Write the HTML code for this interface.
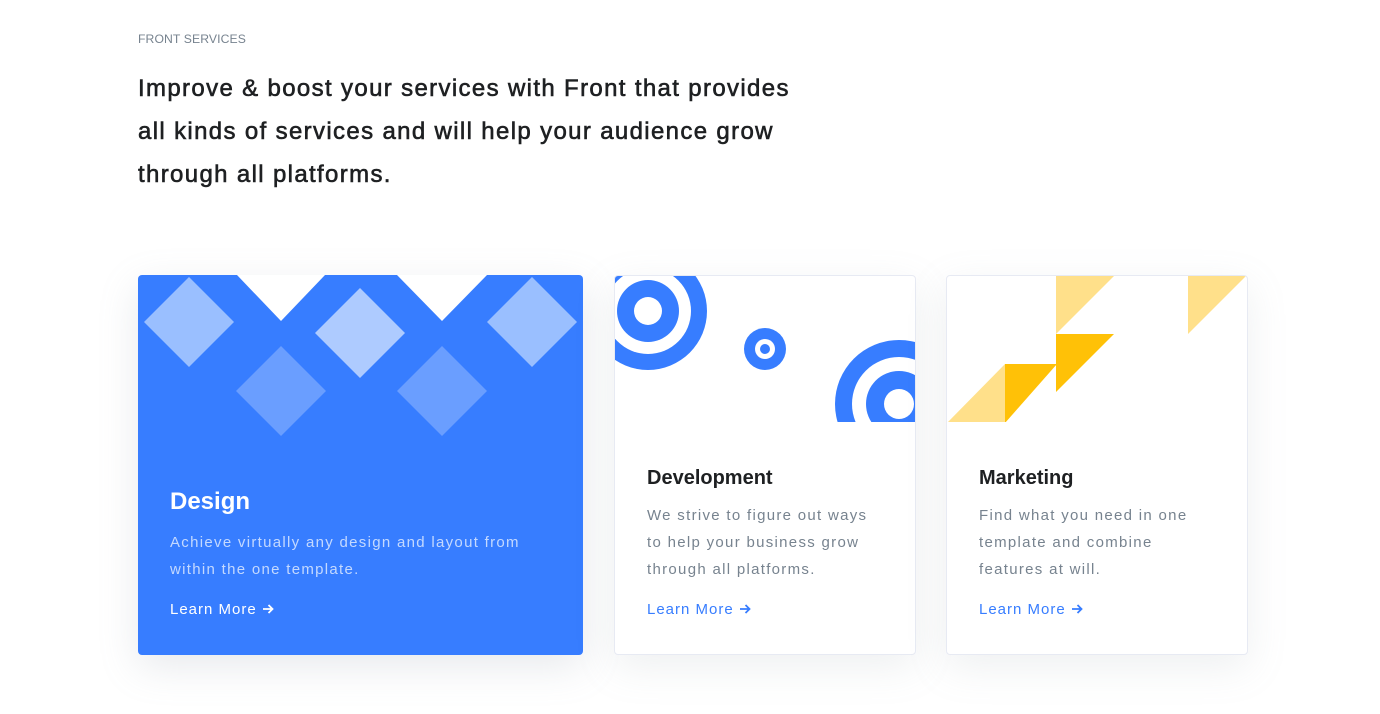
<!DOCTYPE html>
<html><head><meta charset="utf-8"><style>
*{margin:0;padding:0;box-sizing:border-box}
body{width:1380px;height:714px;background:#fff;font-family:"Liberation Sans",sans-serif;position:relative;overflow:hidden}
.sub{position:absolute;left:138px;top:32px;font-size:12.2px;color:#77838f;letter-spacing:0.1px}
.h{position:absolute;left:138px;top:67px;font-size:24px;line-height:43px;color:#1e2022;letter-spacing:1.35px;width:800px;-webkit-text-stroke:0.6px #1e2022}
.card{position:absolute;top:275px;height:380px;border-radius:4px;overflow:hidden}
.c1{left:138px;width:445px;background:#377dff;box-shadow:0 12px 40px rgba(140,152,164,.2)}
.c2{left:614px;width:302px;background:#fff;border:1px solid #e7eaf3;box-shadow:0 12px 40px rgba(140,152,164,.15)}
.c3{left:946px;width:302px;background:#fff;border:1px solid #e7eaf3;box-shadow:0 12px 40px rgba(140,152,164,.15)}
.t{position:absolute;left:32px;font-size:20px;color:#1e2022;font-weight:bold}
.p{position:absolute;left:32px;font-size:15px;line-height:27px;color:#77838f;letter-spacing:1.3px;white-space:nowrap}
.l{position:absolute;left:32px;font-size:15px;color:#377dff;letter-spacing:1px;white-space:nowrap}
.l svg{position:relative;display:inline-block;vertical-align:middle;margin-left:5px;margin-top:-2px}
svg.bg{position:absolute;left:0;top:0}
</style></head><body>
<div class="sub">FRONT SERVICES</div>
<div class="h">Improve &amp; boost your services with Front that provides<br>all kinds of services and will help your audience grow<br>through all platforms.</div>

<div class="card c1">
<svg class="bg" width="445" height="200">
<polygon points="99,0 187,0 143,46" fill="#fff"/>
<polygon points="259,0 349,0 304,46" fill="#fff"/>
<polygon points="51,2 96,47 51,92 6,47" fill="#9abfff"/>
<polygon points="143,71 188,116 143,161 98,116" fill="#6a9eff"/>
<polygon points="222,13 267,58 222,103 177,58" fill="#aecbff"/>
<polygon points="304,71 349,116 304,161 259,116" fill="#6a9eff"/>
<polygon points="394,2 439,47 394,92 349,47" fill="#9abfff"/>
</svg>
<div class="t" style="top:213px;font-size:24px;color:#fff">Design</div>
<div class="p" style="top:254px;color:#c4d9ff">Achieve virtually any design and layout from<br>within the one template.</div>
<div class="l" style="top:326px;color:#fff">Learn More<svg width="12" height="12" viewBox="0 0 12 12"><path d="M1 6H10.5M6.5 2L10.5 6L6.5 10" stroke="#fff" stroke-width="1.8" fill="none"/></svg></div>
</div>

<div class="card c2">
<svg class="bg" width="300" height="146">
<circle cx="33" cy="35" r="59" fill="#377dff"/><circle cx="33" cy="35" r="43" fill="#fff"/><circle cx="33" cy="35" r="31" fill="#377dff"/><circle cx="33" cy="35" r="14" fill="#fff"/>
<circle cx="150" cy="73" r="21" fill="#377dff"/><circle cx="150" cy="73" r="10" fill="#fff"/><circle cx="150" cy="73" r="5" fill="#377dff"/>
<circle cx="284" cy="128" r="64" fill="#377dff"/><circle cx="284" cy="128" r="47" fill="#fff"/><circle cx="284" cy="128" r="33" fill="#377dff"/><circle cx="284" cy="128" r="15" fill="#fff"/>
</svg>
<div class="t" style="top:191px">Development</div>
<div class="p" style="top:226px">We strive to figure out ways<br>to help your business grow<br>through all platforms.</div>
<div class="l" style="top:325px">Learn More<svg width="12" height="12" viewBox="0 0 12 12"><path d="M1 6H10.5M6.5 2L10.5 6L6.5 10" stroke="#377dff" stroke-width="1.8" fill="none"/></svg></div>
</div>

<div class="card c3">
<svg class="bg" width="300" height="146">
<polygon points="109,0 167,0 109,58" fill="#ffe08a"/>
<polygon points="241,0 299,0 241,58" fill="#ffe08a"/>
<polygon points="109,58 167,58 109,116" fill="#ffc107"/>
<polygon points="58,88 110,88 58,147" fill="#ffc107"/>
<polygon points="0,147 58,88 58,147" fill="#ffe08a"/>
</svg>
<div class="t" style="top:191px">Marketing</div>
<div class="p" style="top:226px">Find what you need in one<br>template and combine<br>features at will.</div>
<div class="l" style="top:325px">Learn More<svg width="12" height="12" viewBox="0 0 12 12"><path d="M1 6H10.5M6.5 2L10.5 6L6.5 10" stroke="#377dff" stroke-width="1.8" fill="none"/></svg></div>
</div>
</body></html>
